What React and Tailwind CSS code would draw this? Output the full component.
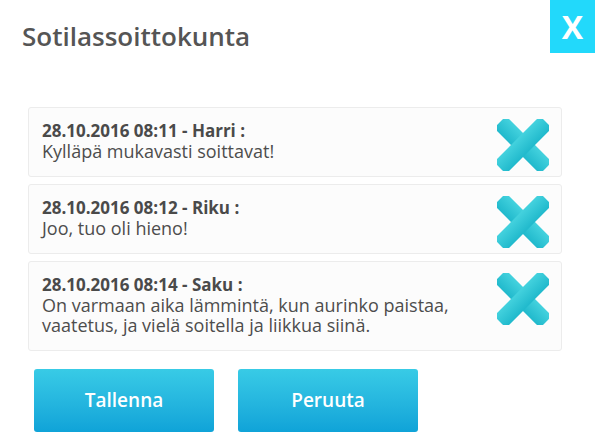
const messages = [
  { stamp: "28.10.2016 08:11 - Harri :", text: "Kylläpä mukavasti soittavat!" },
  { stamp: "28.10.2016 08:12 - Riku :", text: "Joo, tuo oli hieno!" },
  {
    stamp: "28.10.2016 08:14 - Saku :",
    text: "On varmaan aika lämmintä, kun aurinko paistaa, vaatetus, ja vielä soitella ja liikkua siinä.",
  },
];

const DeleteIcon = ({ id }) => (
  <svg width="52" height="52" viewBox="0 0 52 52">
    <defs>
      <linearGradient id={id} x1="0" y1="0" x2="0" y2="1">
        <stop offset="0" stopColor="#44d2de" />
        <stop offset="1" stopColor="#20b9cc" />
      </linearGradient>
    </defs>
    <g fill={`url(#${id})`}>
      <rect x="-6.5" y="17.5" width="65" height="17" rx="5" transform="rotate(45 26 26)" />
      <rect x="-6.5" y="17.5" width="65" height="17" rx="5" transform="rotate(-45 26 26)" />
    </g>
  </svg>
);

export default function App() {
  return (
    <div
      className="w-[595px] h-[443px] bg-white text-[#4d4d4d] overflow-hidden"
      style={{ fontFamily: "'Open Sans', 'Noto Sans', sans-serif" }}
    >
      {/* header */}
      <div className="flex justify-between items-start">
        <h1 className="pl-[22px] pt-[21px] text-[26px] leading-[30px] font-semibold text-[#555]">
          Sotilassoittokunta
        </h1>
        <button className="w-[45px] h-[53px] bg-[#22d9fb] text-white text-[32px] font-bold leading-none flex items-center justify-center">
          X
        </button>
      </div>

      {/* messages */}
      <div className="mt-[54px] ml-[28px] mr-[33px] flex flex-col gap-[7px]">
        {messages.map((m, i) => (
          <div
            key={i}
            className="flex justify-between items-start border border-[#ececec] rounded-[3px] bg-[#fcfcfc] pl-[13px] pr-[12px] pt-[11px]"
          >
            <div className="pt-[2px] pb-[15px] max-w-[430px]">
              <div className="text-[17px] leading-[20px] font-bold text-[#4a4a4a]">{m.stamp}</div>
              <div className="text-[18px] leading-[20px]">{m.text}</div>
            </div>
            <DeleteIcon id={`g${i}`} />
          </div>
        ))}
      </div>

      {/* actions */}
      <div className="mt-[18px] ml-[34px] flex gap-[24px]">
        <button className="w-[180px] h-[63px] rounded-[3px] bg-gradient-to-b from-[#38cbe6] to-[#0fa3d8] text-white text-[19px] font-semibold">
          Tallenna
        </button>
        <button className="w-[180px] h-[63px] rounded-[3px] bg-gradient-to-b from-[#38cbe6] to-[#0fa3d8] text-white text-[19px] font-semibold">
          Peruuta
        </button>
      </div>
    </div>
  );
}
